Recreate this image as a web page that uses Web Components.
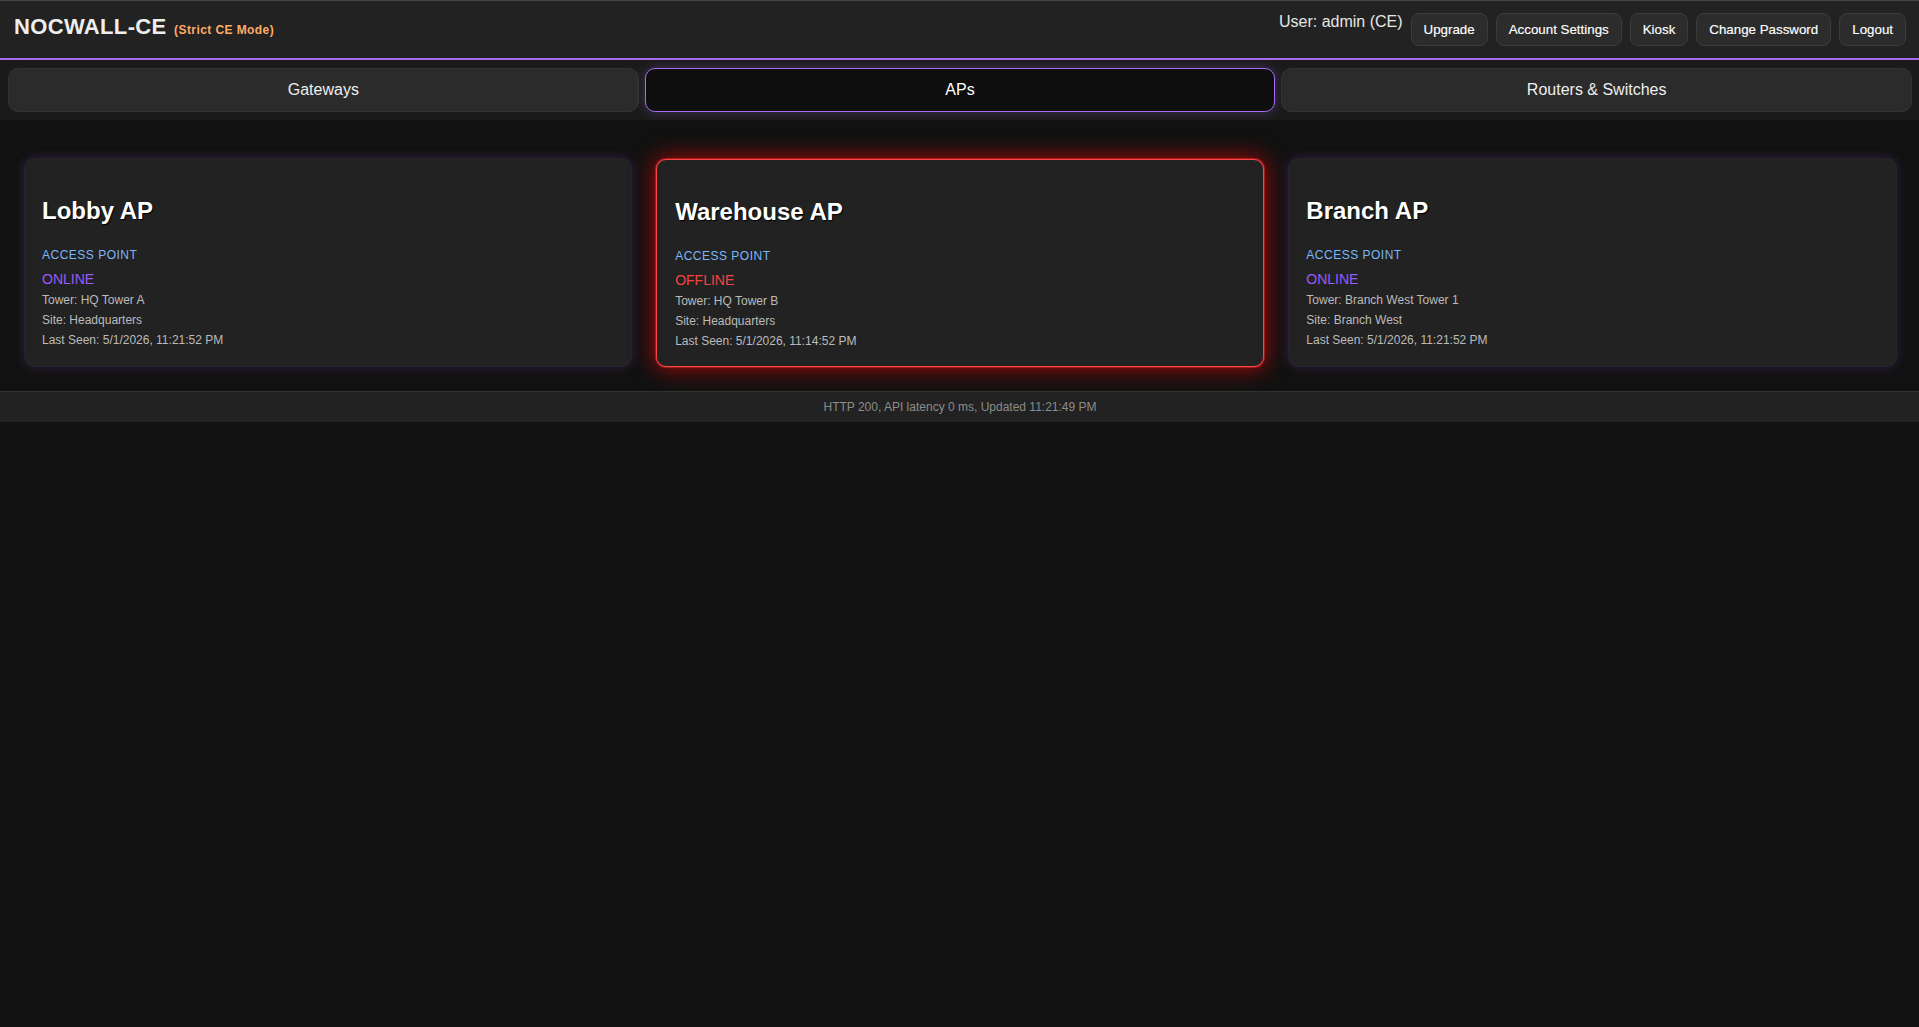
<!DOCTYPE html>
<html lang="en">
<head>
<meta charset="utf-8">
<title>NOCWALL-CE</title>
<style>
html,body{margin:0;background:#111;color:#eee;font-family:"Liberation Sans",Arial,sans-serif;}
</style>
</head>
<body>
<noc-header user="User: admin (CE)">
  <noc-button>Upgrade</noc-button>
  <noc-button>Account Settings</noc-button>
  <noc-button>Kiosk</noc-button>
  <noc-button>Change Password</noc-button>
  <noc-button>Logout</noc-button>
</noc-header>
<noc-tabs>
  <noc-tab>Gateways</noc-tab>
  <noc-tab active>APs</noc-tab>
  <noc-tab>Routers &amp; Switches</noc-tab>
</noc-tabs>
<noc-grid>
  <noc-card name="Lobby AP" status="ONLINE" tower="HQ Tower A" site="Headquarters" seen="5/1/2026, 11:21:52 PM"></noc-card>
  <noc-card offline name="Warehouse AP" status="OFFLINE" tower="HQ Tower B" site="Headquarters" seen="5/1/2026, 11:14:52 PM"></noc-card>
  <noc-card name="Branch AP" status="ONLINE" tower="Branch West Tower 1" site="Branch West" seen="5/1/2026, 11:21:52 PM"></noc-card>
</noc-grid>
<noc-status>HTTP 200, API latency 0 ms, Updated 11:21:49 PM</noc-status>
<script>
function define(name, css, html){
  customElements.define(name, class extends HTMLElement{
    constructor(){super();this.attachShadow({mode:"open"});}
    connectedCallback(){
      this.shadowRoot.innerHTML = "<style>"+css+"</style>"+(typeof html==="function"?html(this):html);
    }
  });
}
define("noc-header",`
:host{display:flex;justify-content:space-between;align-items:flex-start;box-sizing:border-box;height:60px;padding:12px 13px 12px 14px;background:#222;border-top:1px solid #444;border-bottom:2px solid #a86cf0;}
.title{font-size:22px;font-weight:700;letter-spacing:.35px;color:#eee;line-height:25px;margin-top:1px;}
.sub{font-size:12px;letter-spacing:.42px;color:#ffab66;margin-left:1px;}
.right{display:flex;align-items:flex-start;gap:8px;}
.user{font-size:16px;line-height:18px;color:#e6e6e6;}
`,el=>`<div class="title">NOCWALL-CE <span class="sub">(Strict CE Mode)</span></div><div class="right"><span class="user">${el.getAttribute("user")}</span><slot></slot></div>`);
define("noc-button",`
:host{display:block;box-sizing:border-box;height:33px;padding:8px 12px;background:#2c2c2c;border:1px solid #3c3c3c;border-radius:8px;font-size:13.33px;line-height:15px;color:#fff;white-space:nowrap;-webkit-text-stroke:.15px #fff;}
`,`<slot></slot>`);
define("noc-tabs",`
:host{display:grid;grid-template-columns:repeat(3,1fr);gap:6px;padding:8px 7px 8px 8px;background:#1a1a1a;}
`,`<slot></slot>`);
define("noc-tab",`
:host{display:flex;align-items:center;justify-content:center;box-sizing:border-box;height:44px;background:#2b2b2b;border:1px solid #333;border-radius:10px;font-size:16px;color:#eee;}
:host([active]){background:#0e0e0e;border-color:#a86cf0;color:#fff;box-shadow:0 0 12px rgba(168,108,240,.3);}
`,`<slot></slot>`);
define("noc-grid",`
:host{display:grid;grid-template-columns:repeat(3,1fr);gap:24px;padding:38px 22.5px 24px 24px;}
`,`<slot></slot>`);
define("noc-card",`
:host{display:block;box-sizing:border-box;padding:38px 17px 14px;background:#222;border:1px solid #272330;border-radius:10px;box-shadow:0 0 11px rgba(150,80,220,.24);}
:host([offline]){border:1px solid #ff4646;margin-top:1px;padding:38px 18px 15px;box-shadow:0 0 1px 1px rgba(235,45,45,.55),0 0 22px 2px rgba(255,0,0,.6);}
h3{margin:0 0 23px;font-size:24px;line-height:28px;font-weight:700;color:#fff;text-shadow:1px 1px 1px #000;}
.type{font-size:12px;line-height:14px;letter-spacing:.5px;color:#79b8f7;margin-bottom:9px;}
.status{font-size:14px;line-height:16px;color:#9b59f7;margin-bottom:3px;}
:host([offline]) .status{color:#f44343;}
.row{font-size:12px;line-height:20px;color:#bbb;}
`,el=>{const a=n=>el.getAttribute(n);return `<h3>${a("name")}</h3><div class="type">ACCESS POINT</div><div class="status">${a("status")}</div><div class="row">Tower: ${a("tower")}</div><div class="row">Site: ${a("site")}</div><div class="row">Last Seen: ${a("seen")}</div>`;});
define("noc-status",`
:host{display:block;box-sizing:border-box;height:31px;padding-left:1px;border-top:1px solid #333;background:#222;font-size:12px;line-height:30px;text-align:center;color:#8c8c8c;}
`,`<slot></slot>`);
</script>
</body>
</html>
